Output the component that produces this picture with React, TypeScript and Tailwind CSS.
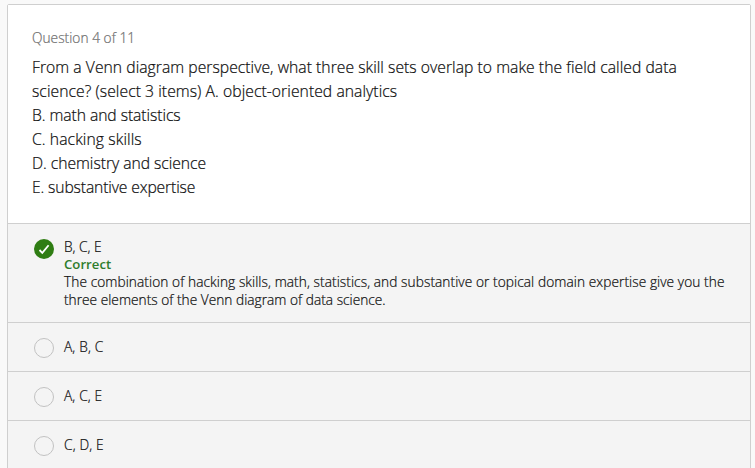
const choices = ["A, B, C", "A, C, E", "C, D, E"];

export default function App() {
  return (
    <div className="h-[468px] w-[755px] overflow-hidden bg-[#f9f9f9] pl-[7px] pt-1 font-['Open_Sans','Noto_Sans',sans-serif] font-light text-[#101010] [-webkit-text-stroke:0.22px]">
      <main className="h-[480px] w-[744px] rounded-t-[2px] border border-[#cfcfcf] bg-[#f4f4f4]">
        <section className="h-[218px] bg-white pl-6 pt-[21px]">
          <p className="text-[13.7px] leading-6 tracking-[0.04px] text-[#707070]">Question 4 of 11</p>
          <div className="mt-[5px] whitespace-nowrap text-[15.7px] leading-6">
            <p className="tracking-[0.04px]">From a Venn diagram perspective, what three skill sets overlap to make the field called data</p>
            <p className="tracking-[0.06px]">science? (select 3 items) A. object-oriented analytics</p>
            <p className="tracking-[-0.06px]">B. math and statistics</p>
            <p className="tracking-[0.1px]">C. hacking skills</p>
            <p className="tracking-[-0.03px]">D. chemistry and science</p>
            <p className="tracking-[-0.13px]">E. substantive expertise</p>
          </div>
        </section>
        <section className="flex h-[99px] border-t border-[#cfcfcf] pl-[26px] pt-[15px]">
          <svg className="h-5 w-5 shrink-0" viewBox="0 0 20 20">
            <circle cx="10" cy="10" r="10" fill="#2f7d13" />
            <path d="M5.5 11 8.3 13.8 14.6 6.2" fill="none" stroke="white" strokeWidth="1.8" />
          </svg>
          <div className="-mt-[1px] ml-[10px] whitespace-nowrap text-[13.7px] leading-[17.5px]">
            <p>B, C, E</p>
            <p className="text-[13.2px] font-semibold text-[#2f7d2c] [-webkit-text-stroke:0px]">Correct</p>
            <p className="tracking-[0.075px]">The combination of hacking skills, math, statistics, and substantive or topical domain expertise give you the</p>
            <p className="tracking-[0.02px]">three elements of the Venn diagram of data science.</p>
          </div>
        </section>
        {choices.map((c) => (
          <label key={c} className="flex h-[49px] items-center border-t border-[#cfcfcf] pl-[26px] pt-[2px] text-[13.7px] tracking-[0.15px]">
            <span className="mr-[10px] h-5 w-5 rounded-full border border-[#c2c2c2]" />
            <span className="-mt-px">{c}</span>
          </label>
        ))}
      </main>
    </div>
  );
}
